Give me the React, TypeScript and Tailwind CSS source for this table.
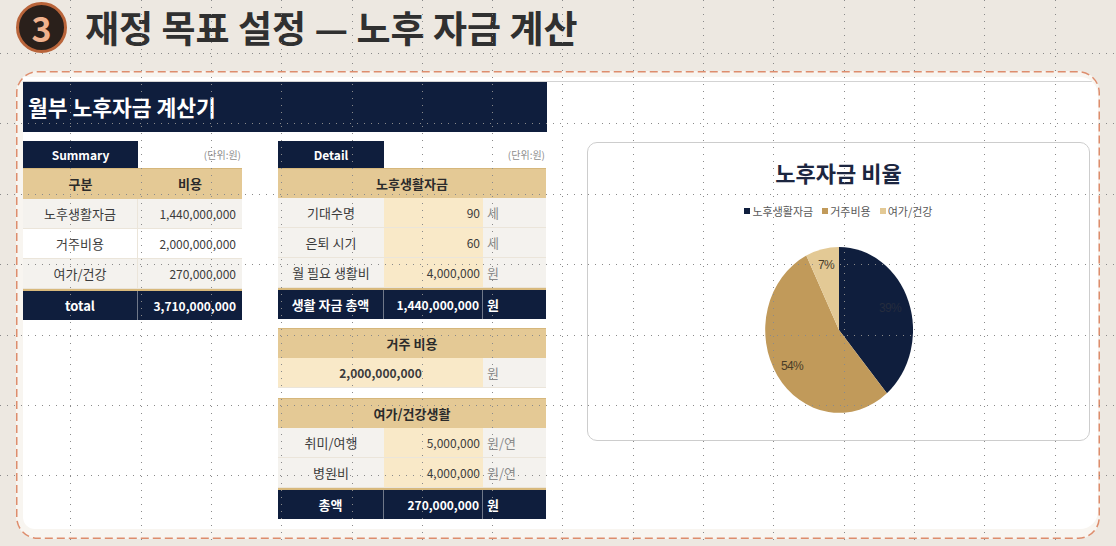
import React from "react";

const GX = Array.from({ length: 15 }, (_, i) => Math.round(70.3 * (i + 1)) + 0.5);
const GY = [53.5, 123.5, 194.5, 264.5, 335.5, 405.5, 475.5];

function GridOverlay() {
  return (
    <svg className="absolute inset-0 pointer-events-none" width={1116} height={546}>
      {GX.map((x) => (
        <line key={"x" + x} x1={x} y1={0} x2={x} y2={546} stroke="#8a8a8a" strokeWidth={1} strokeDasharray="1 6" />
      ))}
      {GY.map((y) => (
        <line key={"y" + y} x1={0} y1={y} x2={1116} y2={y} stroke="#8a8a8a" strokeWidth={1} strokeDasharray="1 6" />
      ))}
    </svg>
  );
}

function SummaryTable() {
  const rows = [
    { label: "노후생활자금", value: "1,440,000,000", bg: "bg-[#f4f2ee]" },
    { label: "거주비용", value: "2,000,000,000", bg: "bg-white" },
    { label: "여가/건강", value: "270,000,000", bg: "bg-[#f4f2ee]" },
  ];
  return (
    <div className="w-[219px] text-[12px] text-[#3b3b3b]">
      <div className="flex h-[27px]">
        <div className="w-[115px] bg-[#0f1e3d] text-white font-bold flex items-center justify-center">Summary</div>
        <div className="flex-1 flex items-center justify-end text-[10px] text-[#8d8d8d] pr-[1px]">(단위:원)</div>
      </div>
      <div className="flex h-[31px] bg-[#e4c995] font-bold text-[13px] text-[#2b2b2b] border-t border-[#d6b77c]">
        <div className="w-[115px] flex items-center justify-center">구분</div>
        <div className="flex-1 flex items-center justify-center">비용</div>
      </div>
      {rows.map((r) => (
        <div key={r.label} className={"flex h-[30px] border-b border-[#ebe5da] " + r.bg}>
          <div className="w-[115px] flex items-center justify-center border-r border-[#ebe5da] text-[13px]">{r.label}</div>
          <div className="flex-1 flex items-center justify-end pr-[6px]">{r.value}</div>
        </div>
      ))}
      <div className="flex h-[31px] bg-[#0f1e3d] border-t-2 border-[#d8b97c] text-white font-bold">
        <div className="w-[115px] flex items-center justify-center border-r border-[#6f7889] text-[13px]">total</div>
        <div className="flex-1 flex items-center justify-end pr-[6px]">3,710,000,000</div>
      </div>
    </div>
  );
}

function TanHeader({ children }: { children: React.ReactNode }) {
  return (
    <div className="h-[30px] bg-[#e4c995] border-t border-[#d6b77c] font-bold text-[13px] text-[#2b2b2b] flex items-center justify-center">
      {children}
    </div>
  );
}

function DataRow({ label, value, unit }: { label: string; value: string; unit: string }) {
  return (
    <div className="flex h-[30px] border-b border-[#ebe5da]">
      <div className="w-[106px] bg-[#f4f2ee] flex items-center justify-center text-[13px]">{label}</div>
      <div className="w-[99px] bg-[#f9e9c8] flex items-center justify-end pr-[3px]">{value}</div>
      <div className="flex-1 bg-[#f4f2ee] flex items-center pl-[4px] text-[13px] text-[#8a8a8a]">{unit}</div>
    </div>
  );
}

function TotalRow({ label, value, unit }: { label: string; value: string; unit: string }) {
  return (
    <div className="flex h-[31px] bg-[#0f1e3d] border-t-2 border-[#d8b97c] text-white font-bold">
      <div className="w-[106px] flex items-center justify-center border-r border-[#6f7889] text-[13px]">{label}</div>
      <div className="w-[99px] flex items-center justify-end pr-[3px] border-r border-[#6f7889]">{value}</div>
      <div className="flex-1 flex items-center pl-[4px] text-[13px]">{unit}</div>
    </div>
  );
}

function DetailTable() {
  return (
    <div className="w-[268px] text-[12px] text-[#3b3b3b]">
      <div className="flex h-[27px]">
        <div className="w-[106px] bg-[#0f1e3d] text-white font-bold flex items-center justify-center">Detail</div>
        <div className="flex-1 flex items-center justify-end text-[10px] text-[#8d8d8d] pr-[1px]">(단위:원)</div>
      </div>
      <TanHeader>노후생활자금</TanHeader>
      <DataRow label="기대수명" value="90" unit="세" />
      <DataRow label="은퇴 시기" value="60" unit="세" />
      <DataRow label="월 필요 생활비" value="4,000,000" unit="원" />
      <TotalRow label="생활 자금 총액" value="1,440,000,000" unit="원" />

      <div className="mt-[9px]">
        <TanHeader>거주 비용</TanHeader>
        <div className="flex h-[30px] border-b border-[#ebe5da]">
          <div className="w-[205px] bg-[#f9e9c8] flex items-center justify-center font-bold">2,000,000,000</div>
          <div className="flex-1 bg-[#f4f2ee] flex items-center pl-[4px] text-[13px] text-[#8a8a8a]">원</div>
        </div>
      </div>

      <div className="mt-[10px]">
        <TanHeader>여가/건강생활</TanHeader>
        <DataRow label="취미/여행" value="5,000,000" unit="원/연" />
        <DataRow label="병원비" value="4,000,000" unit="원/연" />
        <TotalRow label="총액" value="270,000,000" unit="원" />
      </div>
    </div>
  );
}

function LegendItem({ color, label }: { color: string; label: string }) {
  return (
    <div className="flex items-center gap-[2px]">
      <span className={"w-[6px] h-[6px] " + color} />
      <span>{label}</span>
    </div>
  );
}

function ChartBox() {
  return (
    <div className="w-[503px] h-[299px] mt-[1px] border-[1.5px] border-[#cdcdcd] rounded-[10px] bg-white flex flex-col items-center">
      <div className="mt-[16px] h-[26px] flex items-center text-[22px] font-bold text-[#1c2640]">노후자금 비율</div>
      <div className="mt-[19px] h-[14px] flex items-center gap-[9px] text-[11px] text-[#595959]">
        <LegendItem color="bg-[#0f1e3d]" label="노후생활자금" />
        <LegendItem color="bg-[#c19a5a]" label="거주비용" />
        <LegendItem color="bg-[#e3c995]" label="여가/건강" />
      </div>
      <svg className="mt-[29px]" width={148} height={166} viewBox="0 0 148 166">
        <path d="M74,83 L74,0 A74,83 0 0 1 121.9,146.3 Z" fill="#0f1e3d" />
        <path d="M74,83 L121.9,146.3 A74,83 0 1 1 41.3,8.5 Z" fill="#c19a5a" />
        <path d="M74,83 L41.3,8.5 A74,83 0 0 1 74,0 Z" fill="#e3c995" />
        <g fontFamily="'Liberation Sans', sans-serif" fontSize={12} letterSpacing={-0.6} textAnchor="middle" dominantBaseline="central">
          <text x={61} y={18} fill="#4a3d28">7%</text>
          <text x={125} y={61} fill="#252c3e">39%</text>
          <text x={27} y={119} fill="#4a3d28">54%</text>
        </g>
      </svg>
    </div>
  );
}

export default function App() {
  return (
    <div className="relative w-[1116px] h-[546px] overflow-hidden bg-[#ede8e1] font-['Noto_Sans_CJK_KR',sans-serif]">
      <header className="flex items-center h-[55px] pl-[16px] gap-[18px]">
        <div className="w-[51px] h-[51px] rounded-full bg-[#2a201b] border-[3px] border-[#b9643a] flex items-center justify-center text-[34px] font-bold text-[#f1b28e] leading-none">
          3
        </div>
        <h1 className="text-[37px] font-bold text-[#303030] leading-none">재정 목표 설정 — 노후 자금 계산</h1>
      </header>
      <div className="relative ml-[16px] mt-[16px] w-[1084px] h-[468px] rounded-[22px] bg-[#f8f5f0] pt-[6px] pl-[7px] pr-[2px] pb-[10px]">
        <svg className="absolute inset-0 pointer-events-none" width={1084} height={468}>
          <rect x={0.75} y={0.75} width={1082.5} height={466.5} rx={21} fill="none" stroke="#dd8d6d" strokeWidth={1.5} strokeDasharray="8 4" />
        </svg>
        <div className="relative h-full bg-white rounded-tr-[18px] rounded-br-[18px] rounded-bl-[12px] overflow-hidden">
          <div className="h-[4px]" />
          <div className="h-px bg-[#d3d3d3] mr-[6px]" />
          <div className="w-[524px] h-[50px] bg-[#0f1e3d] flex items-center pl-[5px] text-white text-[21.5px] font-bold">
            월부 노후자금 계산기
          </div>
          <div className="flex items-start mt-[9px]">
            <SummaryTable />
            <div className="ml-[36px]">
              <DetailTable />
            </div>
            <div className="ml-[41px]">
              <ChartBox />
            </div>
          </div>
        </div>
      </div>
      <GridOverlay />
    </div>
  );
}
